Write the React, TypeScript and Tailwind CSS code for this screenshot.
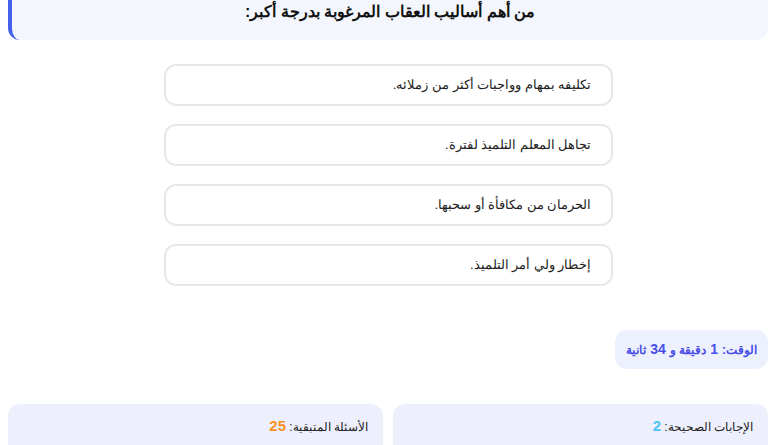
const options = [
  "تكليفه بمهام وواجبات أكثر من زملائه.",
  "تجاهل المعلم التلميذ لفترة.",
  "الحرمان من مكافأة أو سحبها.",
  "إخطار ولي أمر التلميذ.",
];

export default function App() {
  return (
    <div
      dir="rtl"
      className="h-[445px] overflow-hidden bg-white pr-[11px] pl-[8px] font-['Liberation_Sans',Arial,sans-serif] text-[#222]"
    >
      <div className="flex h-[40px] items-start justify-center rounded-b-[12px] border-l-[4px] border-[#4361ee] bg-[#f3f6fd] pt-[1px]">
        <h2 className="text-[16px] font-bold leading-[22px] text-[#111]">
          من أهم أساليب العقاب المرغوبة بدرجة أكبر:
        </h2>
      </div>

      <div className="mx-auto mt-[24px] flex w-[449px] flex-col gap-[18px]">
        {options.map((o) => (
          <div
            key={o}
            className="flex h-[42px] items-center rounded-[12px] border-2 border-[#e6e8ec] bg-white pr-[19px] text-[13px] text-[#222]"
          >
            {o}
          </div>
        ))}
      </div>

      <div className="mt-[44px] flex">
        <div className="flex h-[39px] items-center rounded-[12px] bg-[#edf0fd] px-[11px] text-[12px] font-bold text-[#4a4de6]">
          الوقت: <span className="mx-1 text-[14px]">1</span> دقيقة و{" "}
          <span className="mx-1 text-[14px]">34</span> ثانية
        </div>
      </div>

      <div className="mt-[35px] grid grid-cols-2 gap-[10px]">
        <div className="h-[60px] rounded-[12px] bg-[#edf0fc] pr-[15px] pt-[11px] text-[12px] text-[#222]">
          الإجابات الصحيحة: <span className="text-[15px] font-bold text-[#4fc3f7]">2</span>
        </div>
        <div className="h-[60px] rounded-[12px] bg-[#edf0fc] pr-[15px] pt-[11px] text-[12px] text-[#222]">
          الأسئلة المتبقية: <span className="text-[15px] font-bold text-[#f7931e]">25</span>
        </div>
      </div>
    </div>
  );
}
